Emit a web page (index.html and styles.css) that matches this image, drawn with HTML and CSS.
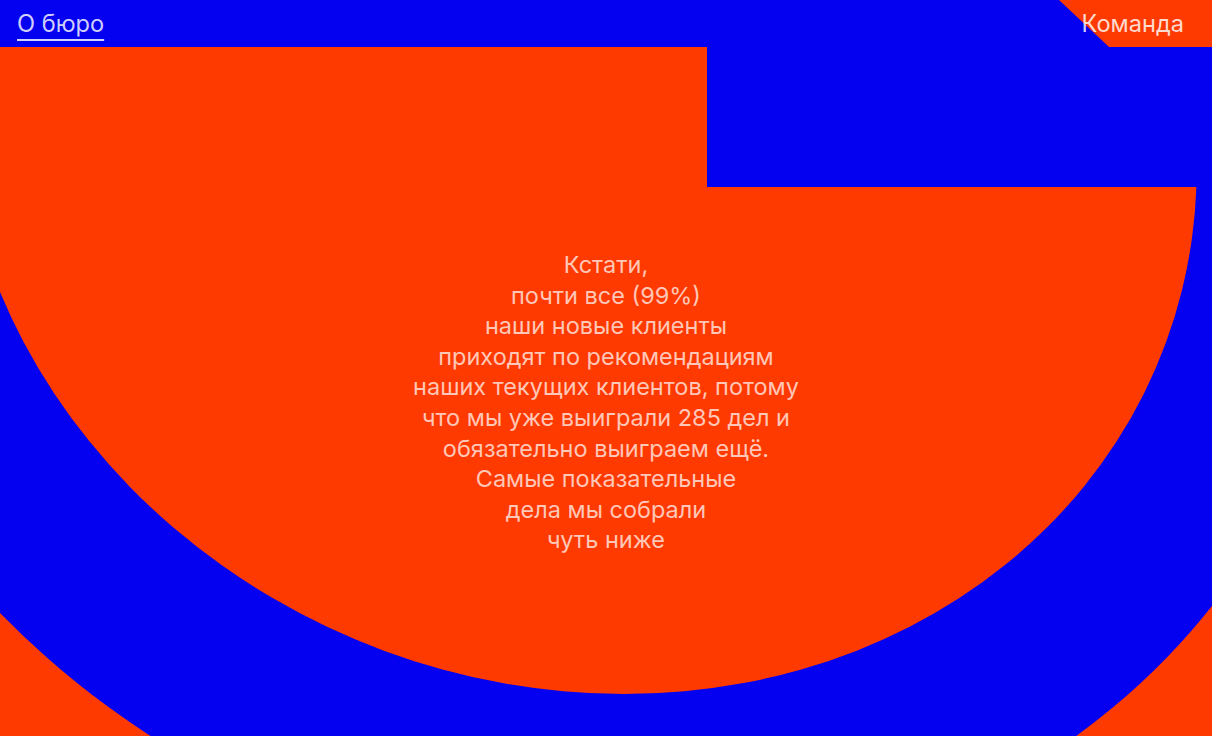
FILE: index.html
```html
<!DOCTYPE html>
<html lang="ru">
<head>
<meta charset="utf-8">
<title>О бюро</title>
<link rel="stylesheet" href="styles.css">
</head>
<body>
<div class="page">
  <svg class="canvas" viewBox="0 0 1212 736" preserveAspectRatio="none" aria-hidden="true">
    <defs>
      <clipPath id="step">
        <path d="M0,47 H707 V187 H1212 V736 H0 Z"/>
      </clipPath>
    </defs>
    <rect class="shape" x="0" y="0" width="1212" height="736"/>
    <ellipse class="bg" cx="576" cy="125" rx="792" ry="753" transform="matrix(1 0 0.0824 1 -23.32 0)"/>
    <g clip-path="url(#step)">
      <ellipse class="shape" cx="590" cy="125" rx="618" ry="569" transform="matrix(1 0 0.0824 1 -23.32 0)"/>
    </g>
    <path class="shape" d="M1059,0 L1212,0 L1212,47 L1109,47 Z"/>
  </svg>
  <header class="nav">
    <a class="nav-link nav-link--current" href="#">О бюро</a>
    <a class="nav-link" href="#">Команда</a>
  </header>
  <main class="stage">
    <p class="lead">Кстати,<br>почти все (99%)<br>наши новые клиенты<br>приходят по рекомендациям<br>наших текущих клиентов, потому<br>что мы уже выиграли 285 дел и<br>обязательно выиграем ещё.<br>Самые показательные<br>дела мы собрали<br>чуть ниже</p>
  </main>
</div>
</body>
</html>
```

FILE: styles.css
```css
html, body {
  margin: 0;
  padding: 0;
  overflow: hidden;
}

body {
  background: #0400f0;
  font-family: "Inter", "Noto Sans", sans-serif;
}

.page {
  position: relative;
  width: 1212px;
  height: 736px;
  overflow: hidden;
}

.canvas {
  position: absolute;
  left: 0;
  top: 0;
  width: 1212px;
  height: 736px;
  display: block;
}

.bg {
  fill: #0400f0;
}

.shape {
  fill: #ff3a00;
}

.nav {
  position: relative;
  display: flex;
  justify-content: space-between;
  align-items: flex-start;
  height: 47px;
  box-sizing: border-box;
  padding: 8px 28px 0 17px;
}

.nav-link {
  font-size: 23.6px;
  line-height: 32px;
  color: rgba(255, 255, 255, 0.82);
  text-decoration: none;
}

.nav-link--current {
  text-decoration: underline;
  text-decoration-thickness: 1.5px;
  text-underline-offset: 7px;
}

.stage {
  position: relative;
  display: flex;
  justify-content: center;
  padding-top: 203px;
}

.lead {
  margin: 0;
  text-align: center;
  font-size: 23.5px;
  line-height: 30.6px;
  color: rgba(255, 255, 255, 0.72);
}
```
